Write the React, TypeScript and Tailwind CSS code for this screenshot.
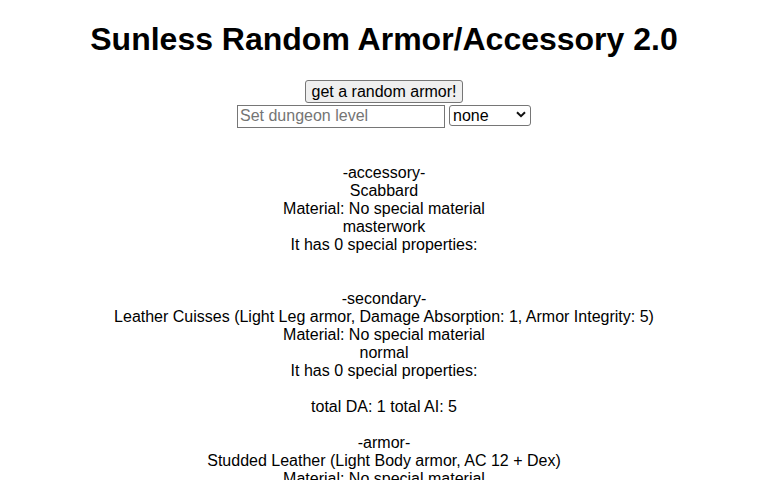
import { useState } from 'react'

type Item = {
  slot: string
  lines: string[]
  totals?: string
}

const items: Item[] = [
  {
    slot: '-accessory-',
    lines: ['Scabbard', 'Material: No special material', 'masterwork', 'It has 0 special properties:']
  },
  {
    slot: '-secondary-',
    lines: [
      'Leather Cuisses (Light Leg armor, Damage Absorption: 1, Armor Integrity: 5)',
      'Material: No special material',
      'normal',
      'It has 0 special properties:'
    ],
    totals: 'total DA: 1 total AI: 5'
  },
  {
    slot: '-armor-',
    lines: [
      'Studded Leather (Light Body armor, AC 12 + Dex)',
      'Material: No special material',
      'normal',
      'It has 0 special properties:'
    ]
  }
]

function Line({ children }: { children?: React.ReactNode }) {
  return <div className="h-[18px] leading-[18px] whitespace-nowrap">{children}</div>
}

export default function App() {
  const [level, setLevel] = useState('')
  const [tier, setTier] = useState('none')

  return (
    <main className="min-h-screen bg-white text-center text-[16px] text-black [font-family:'Liberation_Sans',Arial,sans-serif]">
      <h1 className="pt-[21px] pb-[21px] text-[32px] font-bold leading-[37px]">
        Sunless Random Armor/Accessory 2.0
      </h1>

      <div className="flex flex-col items-center">
        <button className="mt-[1px] h-[23px] rounded-[3px] border border-[#767676] bg-[#efefef] px-[6px] text-[16px] leading-[19px] text-black">
          get a random armor!
        </button>

        <div className="mt-[1px] flex items-center gap-[4px]">
          <input
            value={level}
            onChange={e => setLevel(e.target.value)}
            placeholder="Set dungeon level"
            className="h-[23px] w-[208px] border border-[#767676] px-[2px] text-[16px] leading-[19px] placeholder:text-[#757575]"
          />
          <div className="relative">
            <select
              value={tier}
              onChange={e => setTier(e.target.value)}
              className="h-[21px] w-[82px] appearance-none rounded-[3px] border border-[#767676] bg-white pl-[3px] text-left text-[16px] leading-[19px]"
            >
              <option>none</option>
              <option>low</option>
              <option>mid</option>
              <option>high</option>
            </select>
            <svg
              className="pointer-events-none absolute right-[5px] top-[7px]"
              width="10"
              height="7"
              viewBox="0 0 10 7"
            >
              <path d="M1 1.2 L5 5.2 L9 1.2" fill="none" stroke="#111" strokeWidth="2" />
            </svg>
          </div>
        </div>
      </div>

      <div className="mt-[36px] flex flex-col items-center">
        {items.map(item => (
          <div key={item.slot} className="flex flex-col items-center">
            <Line>{item.slot}</Line>
            {item.lines.map(l => (
              <Line key={l}>{l}</Line>
            ))}
            <Line />
            {item.totals ? (
              <>
                <Line>{item.totals}</Line>
                <Line />
              </>
            ) : (
              <Line />
            )}
          </div>
        ))}
      </div>
    </main>
  )
}
